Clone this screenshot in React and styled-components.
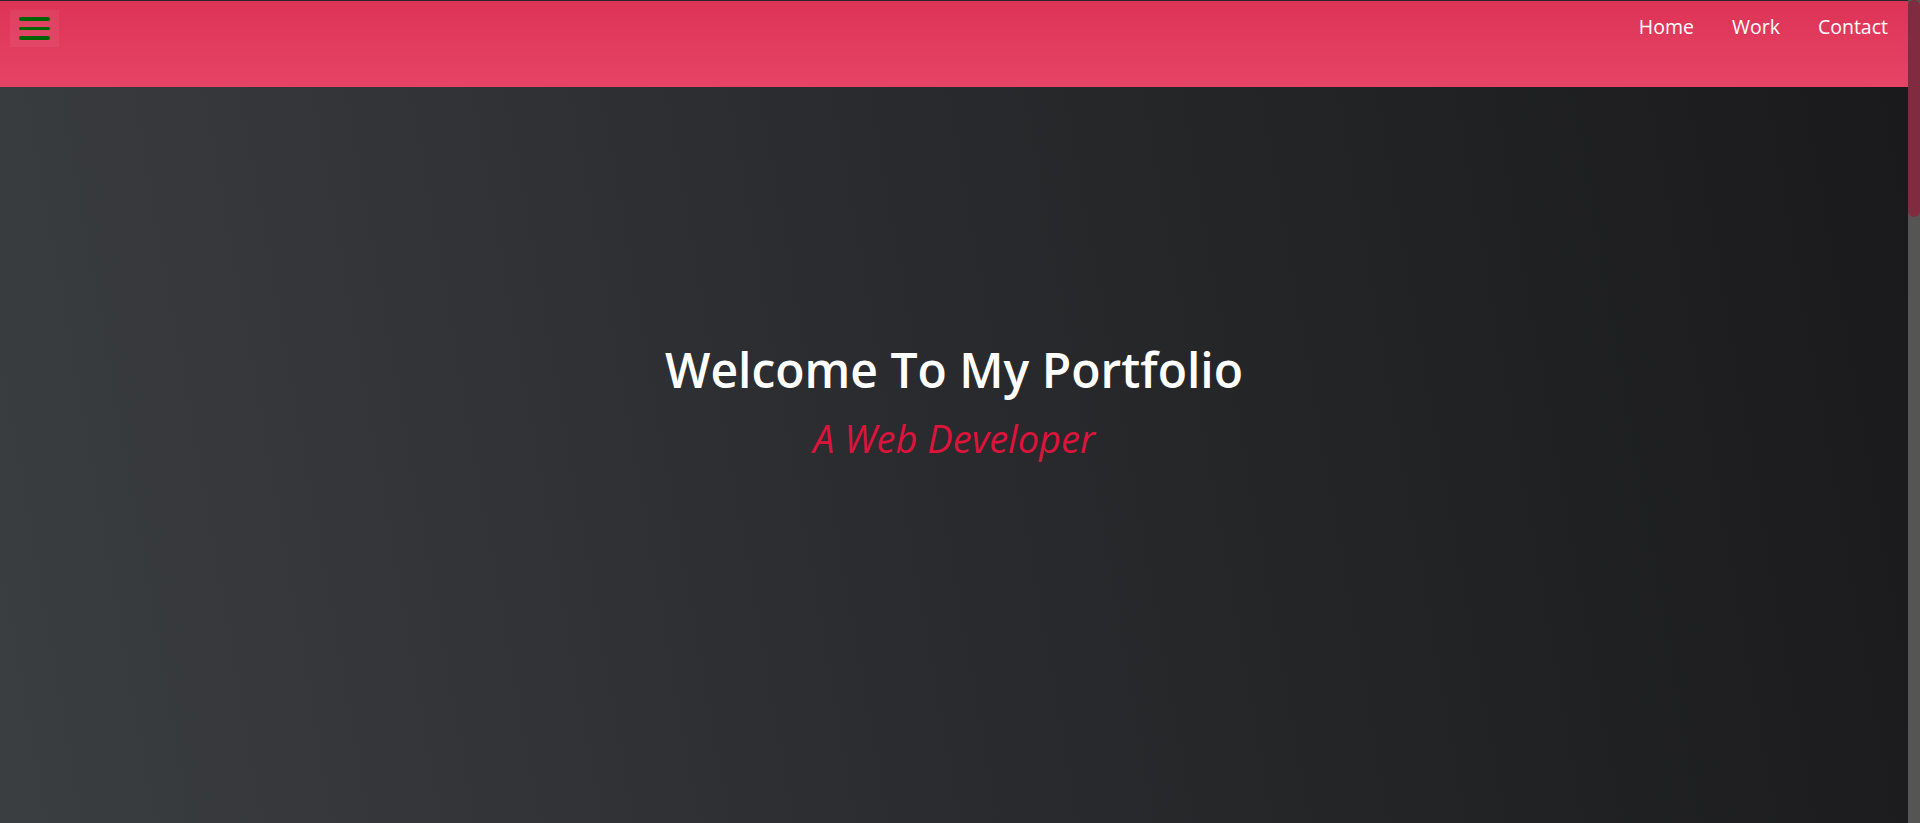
import React from 'react';
import styled, { createGlobalStyle } from 'styled-components';

const GlobalStyle = createGlobalStyle`
  body {
    margin: 0;
    overflow: hidden;
    font-family: 'Open Sans', 'Noto Sans', sans-serif;
    background: #1c1c1e;
  }
`;

const App = () => {
  return (
    <>
      <GlobalStyle />
      <Page>
        <Main>
          <Header>
            <MenuButton aria-label="menu">
              <Bar />
              <Bar />
              <Bar />
            </MenuButton>
            <Nav>
              <NavLink href="#home">Home</NavLink>
              <NavLink href="#work">Work</NavLink>
              <NavLink href="#contact">Contact</NavLink>
            </Nav>
          </Header>
          <Hero>
            <Title>Welcome To My Portfolio</Title>
            <Subtitle>A Web Developer</Subtitle>
          </Hero>
        </Main>
        <ScrollTrack>
          <ScrollThumb />
        </ScrollTrack>
      </Page>
    </>
  );
};

const Page = styled.div`
  display: flex;
  height: 100vh;
`;

const Main = styled.div`
  display: flex;
  flex-direction: column;
  flex: 1;
  min-width: 0;
`;

const Header = styled.header`
  display: flex;
  justify-content: space-between;
  align-items: flex-start;
  height: 87px;
  box-sizing: border-box;
  padding: 9px 20px 0 10px;
  border-top: 1px solid #26262a;
  background: linear-gradient(to bottom, #dd3356, #e64466);
`;

const MenuButton = styled.button`
  display: flex;
  flex-direction: column;
  gap: 6px;
  width: 49px;
  height: 37px;
  padding: 7px 9px;
  box-sizing: border-box;
  border: none;
  background-color: rgba(255, 255, 255, 0.06);
  cursor: pointer;
`;

const Bar = styled.span`
  display: block;
  width: 31px;
  height: 4px;
  border-radius: 2px;
  background-color: #006400;
`;

const Nav = styled.nav`
  display: flex;
  gap: 38px;
  padding-top: 4px;
`;

const NavLink = styled.a`
  color: #ffffff;
  font-size: 19.5px;
  line-height: 26px;
  text-decoration: none;
`;

const Hero = styled.section`
  display: flex;
  flex-direction: column;
  align-items: center;
  flex: 1;
  padding-top: 253px;
  background: linear-gradient(80deg, #3b3e41 0%, #2b2c2f 45%, #1a1a1c 100%);
`;

const Title = styled.h1`
  margin: 0;
  color: #ffffff;
  font-size: 48px;
  font-weight: 600;
  line-height: 60px;
`;

const Subtitle = styled.h2`
  margin: 12px 0 0;
  color: #dc143c;
  font-size: 38px;
  font-weight: 400;
  font-style: italic;
  line-height: 52px;
`;

const ScrollTrack = styled.div`
  width: 12px;
  background: #555555;
`;

const ScrollThumb = styled.div`
  height: 217px;
  border-radius: 6px;
  background: #812b41;
`;

export default App;
